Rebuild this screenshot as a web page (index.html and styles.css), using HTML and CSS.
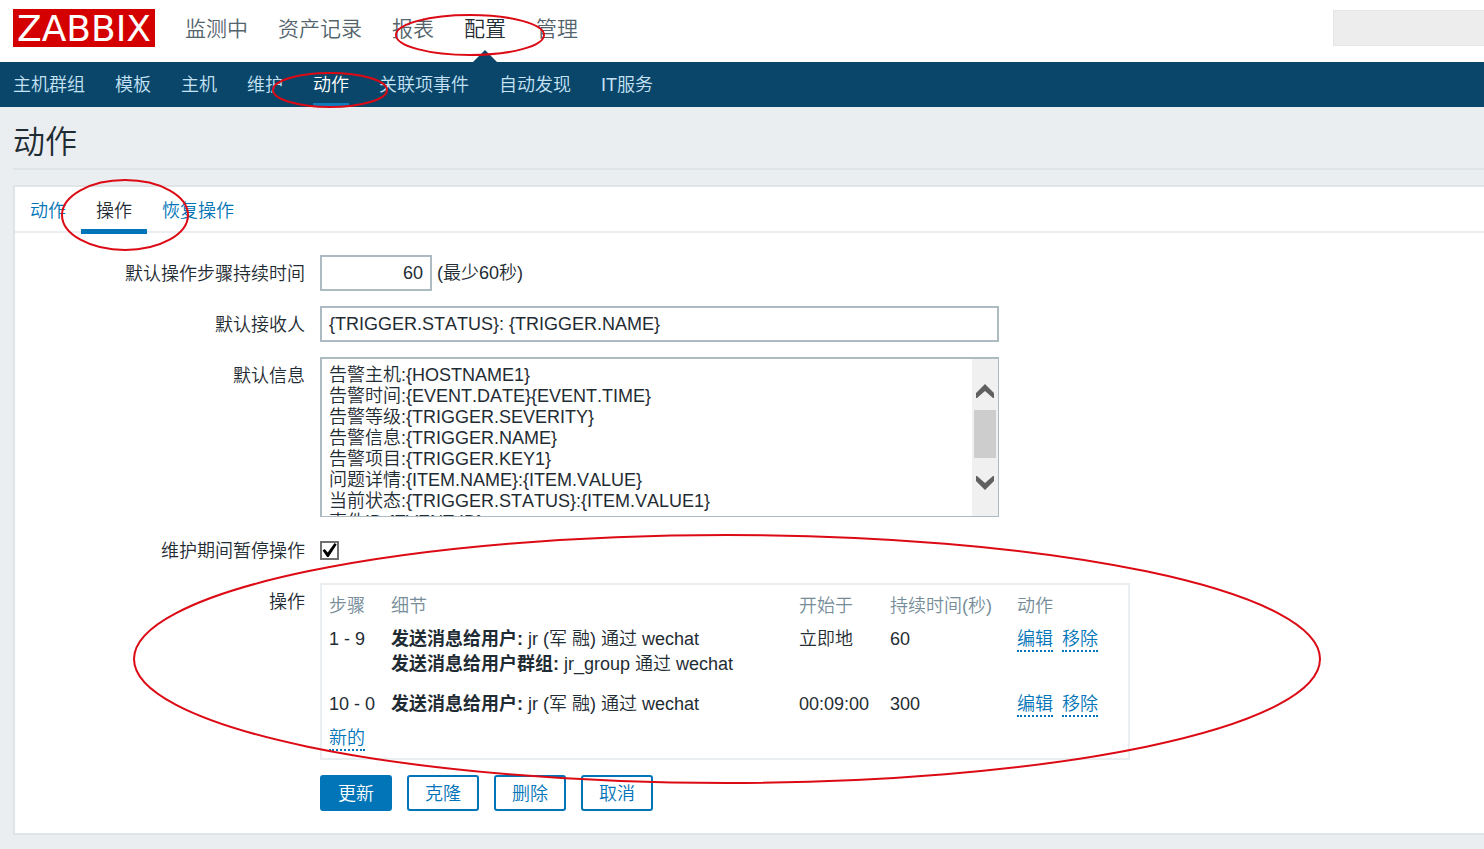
FILE: index.html
```
<!DOCTYPE html>
<html lang="zh-CN">
<head>
<meta charset="utf-8">
<title>动作</title>
<link rel="stylesheet" href="styles.css">
</head>
<body>
<header class="header">
  <a class="logo" href="#">ZABBIX</a>
  <nav class="main-nav">
    <a href="#">监测中</a>
    <a href="#">资产记录</a>
    <a href="#">报表</a>
    <a href="#" class="selected">配置</a>
    <a href="#">管理</a>
  </nav>
  <input class="search" type="text" aria-label="搜索">
</header>
<nav class="sub-nav">
  <a href="#">主机群组</a>
  <a href="#">模板</a>
  <a href="#">主机</a>
  <a href="#">维护</a>
  <a href="#" class="selected">动作</a>
  <a href="#">关联项事件</a>
  <a href="#">自动发现</a>
  <a href="#">IT服务</a>
</nav>
<main class="content">
  <h1 class="title">动作</h1>
  <form class="panel">
    <nav class="tabs">
      <a href="#">动作</a>
      <a href="#" class="selected">操作</a>
      <a href="#">恢复操作</a>
    </nav>
    <div class="form">
      <div class="row">
        <label class="label" for="period">默认操作步骤持续时间</label>
        <div class="field">
          <input class="input input-short" id="period" type="text" value="60">
          <span class="hint">(最少60秒)</span>
        </div>
      </div>
      <div class="row">
        <label class="label" for="subject">默认接收人</label>
        <div class="field">
          <input class="input input-wide" id="subject" type="text" value="{TRIGGER.STATUS}: {TRIGGER.NAME}">
        </div>
      </div>
      <div class="row">
        <label class="label" for="message">默认信息</label>
        <div class="field">
          <div class="message">
            <textarea class="message-text" id="message">告警主机:{HOSTNAME1}
告警时间:{EVENT.DATE}{EVENT.TIME}
告警等级:{TRIGGER.SEVERITY}
告警信息:{TRIGGER.NAME}
告警项目:{TRIGGER.KEY1}
问题详情:{ITEM.NAME}:{ITEM.VALUE}
当前状态:{TRIGGER.STATUS}:{ITEM.VALUE1}
事件ID:{EVENT.ID}</textarea>
            <div class="scrollbar">
              <svg class="chevron" viewBox="0 0 20 14" aria-hidden="true"><path d="M1 14V9L10 0l9 9v5h-1l-8-7-8 7z"/></svg>
              <div class="thumb"></div>
              <svg class="chevron" viewBox="0 0 20 14" aria-hidden="true"><path d="M1 0v5l9 9 9-9V0h-1l-8 7-8-7z"/></svg>
            </div>
          </div>
        </div>
      </div>
      <div class="row">
        <label class="label" for="pause">维护期间暂停操作</label>
        <div class="field"><input class="check" id="pause" type="checkbox" checked></div>
      </div>
      <div class="row">
        <span class="label" id="operations-label">操作</span>
        <div class="field">
          <table class="operations" aria-labelledby="operations-label">
            <thead>
              <tr>
                <th class="col-step">步骤</th>
                <th class="col-detail">细节</th>
                <th class="col-start">开始于</th>
                <th class="col-duration">持续时间(秒)</th>
                <th>动作</th>
              </tr>
            </thead>
            <tbody>
              <tr class="spaced">
                <td>1 - 9</td>
                <td><b>发送消息给用户:</b> jr (军 融) 通过 wechat<br><b>发送消息给用户群组:</b> jr_group 通过 wechat</td>
                <td>立即地</td>
                <td>60</td>
                <td><div class="links"><a href="#">编辑</a><a href="#">移除</a></div></td>
              </tr>
              <tr>
                <td>10 - 0</td>
                <td><b>发送消息给用户:</b> jr (军 融) 通过 wechat</td>
                <td>00:09:00</td>
                <td>300</td>
                <td><div class="links"><a href="#">编辑</a><a href="#">移除</a></div></td>
              </tr>
              <tr class="last">
                <td colspan="5"><div class="links"><a href="#">新的</a></div></td>
              </tr>
            </tbody>
          </table>
        </div>
      </div>
      <div class="row">
        <span class="label"></span>
        <div class="field buttons">
          <button class="button button-main" type="submit">更新</button>
          <button class="button" type="button">克隆</button>
          <button class="button" type="button">删除</button>
          <button class="button" type="button">取消</button>
        </div>
      </div>
    </div>
  </form>
</main>
<svg class="marks" width="1484" height="849" aria-hidden="true">
  <ellipse cx="470" cy="35" rx="74" ry="20"/>
  <ellipse cx="330" cy="90" rx="57" ry="17"/>
  <ellipse cx="125" cy="215" rx="63" ry="35"/>
  <ellipse cx="727" cy="659" rx="593" ry="124"/>
</svg>
</body>
</html>
```
FILE: styles.css
```
* {
  box-sizing: border-box;
}

body {
  position: relative;
  margin: 0;
  min-height: 100vh;
  overflow-x: hidden;
  background: #ebeef0;
  color: #1f2c33;
  font: 350 18px/25px "Liberation Sans", "Noto Sans CJK SC", sans-serif;
  font-kerning: none;
}

a {
  color: #0275b8;
  text-decoration: none;
}

input,
textarea,
button {
  margin: 0;
  font: inherit;
  font-kerning: none;
  color: inherit;
}

.header {
  display: flex;
  align-items: flex-start;
  gap: 30px;
  height: 62px;
  padding-left: 13px;
  background: #fff;
}

.logo {
  width: 142px;
  height: 38px;
  margin-top: 9px;
  background: #d40000;
  color: #fff;
  font: 36px/40px "DejaVu Sans", sans-serif;
  text-align: center;
}

.main-nav {
  display: flex;
  gap: 30px;
  font-size: 21px;
  line-height: 58px;
}

.main-nav a {
  position: relative;
  height: 62px;
  color: #54646d;
}

.main-nav .selected {
  color: #1f2c33;
}

.main-nav .selected::after {
  content: "";
  position: absolute;
  bottom: 0;
  left: 50%;
  margin-left: -12px;
  border: 12px solid transparent;
  border-top: 0;
  border-bottom-color: #0a466a;
}

.search {
  width: 151px;
  height: 36px;
  margin: 10px 0 0 auto;
  border: 1px solid #e6e6e6;
  border-right: 0;
  background: #ededed;
}

.sub-nav {
  display: flex;
  gap: 30px;
  padding-left: 13px;
  background: #0a466a;
  line-height: 47px;
}

.sub-nav a {
  height: 45px;
  color: #c5e3f5;
}

.sub-nav .selected {
  background: linear-gradient(#0f7cc0, #0f7cc0) 0 41px / 100% 3px no-repeat;
  color: #fff;
}

.content {
  padding-left: 13px;
}

.title {
  margin: 0 0 15px;
  padding: 15px 0 6px;
  border-bottom: 2px solid #dfe4e7;
  font-size: 32px;
  font-weight: 350;
  line-height: 40px;
}

.panel {
  border: 2px solid #dfe4e7;
  border-right: 0;
  background: #fff;
}

.tabs {
  display: flex;
  height: 46px;
  border-bottom: 2px solid #ebeef0;
}

.tabs a {
  height: 47px;
  padding: 0 15px;
  line-height: 48px;
}

.tabs .selected {
  border-bottom: 5px solid #0275b8;
  color: #1f2c33;
}

.form {
  display: flex;
  flex-direction: column;
  gap: 15px;
  padding: 22px 0;
}

.row {
  display: flex;
  gap: 15px;
}

.label {
  flex: 0 0 290px;
  height: 36px;
  line-height: 38px;
  text-align: right;
}

.field {
  display: flex;
  flex: 1;
  align-items: center;
  min-width: 0;
  min-height: 36px;
}

.input {
  height: 36px;
  padding: 0 7px;
  border: 2px solid #acbbc2;
  background: #fff;
}

.input-short {
  width: 112px;
  text-align: right;
}

.input-wide,
.message {
  width: 679px;
  max-width: 100%;
}

.hint {
  padding-left: 5px;
}

.message {
  display: flex;
  height: 160px;
  border: solid #acbbc2;
  border-width: 2px 1px 1px 2px;
}

.message-text {
  flex: 1;
  min-width: 0;
  padding: 6px 7px 0;
  border: 0;
  background: #fff;
  line-height: 21px;
  resize: none;
  overflow: hidden;
}

.scrollbar {
  display: flex;
  flex-direction: column;
  align-items: center;
  width: 26px;
  padding-top: 25px;
  background: #f0f0f0;
}

.chevron {
  width: 20px;
  height: 14px;
  fill: #606060;
}

.thumb {
  width: 22px;
  height: 48px;
  margin: 12px 0 18px;
  background: #cdcdcd;
}

.check {
  display: grid;
  place-content: center;
  width: 19px;
  height: 19px;
  border: 2px solid #707070;
  background: #fff;
  appearance: none;
}

.check:checked::before {
  content: "";
  width: 15px;
  height: 15px;
  background: #000;
  clip-path: polygon(4% 54%, 18% 44%, 38% 66%, 84% 4%, 98% 14%, 44% 96%, 34% 96%);
}

.operations {
  width: 810px;
  max-width: 100%;
  border: 2px solid #ebeef0;
  border-spacing: 0;
  table-layout: fixed;
}

.operations th,
.operations td {
  padding: 8px 0 0 7px;
  text-align: left;
  vertical-align: top;
}

.operations th {
  padding-top: 9px;
  color: #768d99;
  font-weight: 350;
}

.operations .spaced td {
  padding-bottom: 7px;
}

.operations .last td {
  padding-top: 9px;
  padding-bottom: 7px;
}

.col-step {
  width: 62px;
}

.col-detail {
  width: 408px;
}

.col-start {
  width: 91px;
}

.col-duration {
  width: 127px;
}

.links {
  display: flex;
  gap: 9px;
}

.links a {
  height: 25px;
  border-bottom: 2px dotted #0275b8;
}

.buttons {
  gap: 15px;
}

.button {
  width: 72px;
  height: 36px;
  padding: 2px 0 0;
  border: 2px solid #0275b8;
  border-radius: 3px;
  background: #fff;
  color: #0275b8;
}

.button-main {
  background: #0275b8;
  color: #fff;
}

.marks {
  position: absolute;
  top: 0;
  left: 0;
  fill: none;
  stroke: #dc0a14;
  stroke-width: 2px;
  pointer-events: none;
}
```
